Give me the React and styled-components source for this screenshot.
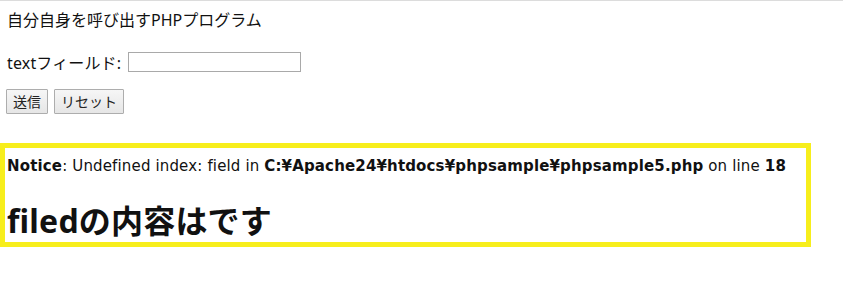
import React from "react"
import styled, { createGlobalStyle } from "styled-components"

const GlobalStyle = createGlobalStyle`
	body {
		margin: 0;
		background: #ffffff;
		color: #111111;
		font-family: "Noto Sans", "Noto Sans CJK JP", sans-serif;
	}
`

const TopRule = styled.div`
	height: 1px;
	background: #dcdcdc;
`

const Page = styled.div`
	padding: 0 0 0 7px;
`

const Title = styled.p`
	margin: 7px 0 0;
	font-size: 16px;
	line-height: 24px;
`

const FieldRow = styled.div`
	display: flex;
	align-items: center;
	gap: 7px;
	margin-top: 18px;
	height: 24px;
	font-size: 16px;
`

const Label = styled.span`
	letter-spacing: 0.15px;
`

const TextInput = styled.input`
	box-sizing: border-box;
	width: 173px;
	height: 20px;
	margin: 0;
	border: 1px solid #a9a9a9;
	padding: 0 2px;
	font-size: 14px;
`

const Buttons = styled.div`
	display: flex;
	gap: 6px;
	margin: 15px 0 0 -1px;
`

const Button = styled.button`
	box-sizing: border-box;
	height: 25px;
	padding: 0 6px;
	border: 1px solid #adadad;
	border-radius: 1px;
	background: linear-gradient(#f6f6f6, #e6e6e6);
	color: #222222;
	font-family: "Noto Sans CJK JP", sans-serif;
	font-size: 14px;
	line-height: 23px;
`

const NoticeBox = styled.div`
	box-sizing: border-box;
	width: 811px;
	margin-top: 29px;
	padding: 8px 0 1px 2px;
	border: 5px solid #f7ee1c;
`

const Notice = styled.div`
	font-family: "DejaVu Sans", "Noto Sans CJK JP", sans-serif;
	font-size: 15px;
	line-height: 20px;
	white-space: nowrap;
	letter-spacing: 0.15px;
`

const Heading = styled.h1`
	margin: 25px 0 0;
	font-size: 32px;
	line-height: 40px;
	font-weight: 700;
	letter-spacing: 0.2px;
`

export default function App() {
	return (
		<>
			<GlobalStyle />
			<TopRule />
			<Page>
				<Title>自分自身を呼び出すPHPプログラム</Title>
				<FieldRow>
					<Label>textフィールド:</Label>
					<TextInput type="text" />
				</FieldRow>
				<Buttons>
					<Button>送信</Button>
					<Button>リセット</Button>
				</Buttons>
			</Page>
			<NoticeBox>
				<Notice>
					<b>Notice</b>: Undefined index: field in <b>C:¥Apache24¥htdocs¥phpsample¥phpsample5.php</b> on line <b>18</b>
				</Notice>
				<Heading>filedの内容はです</Heading>
			</NoticeBox>
		</>
	)
}
